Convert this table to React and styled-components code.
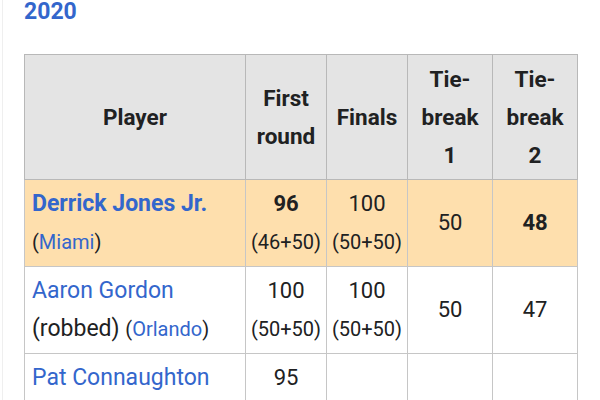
import React from 'react';
import styled, { createGlobalStyle } from 'styled-components';

const GlobalStyle = createGlobalStyle`
  body {
    margin: 0;
    background: #ffffff;
    font-family: Roboto, "Liberation Sans", sans-serif;
    color: #202122;
  }
`;

const rows = [
  {
    player: 'Derrick Jones Jr.',
    team: 'Miami',
    winner: true,
    first: { total: '96', split: '(46+50)' },
    finals: { total: '100', split: '(50+50)' },
    tie1: '50',
    tie2: '48',
  },
  {
    player: 'Aaron Gordon',
    note: '(robbed)',
    team: 'Orlando',
    first: { total: '100', split: '(50+50)' },
    finals: { total: '100', split: '(50+50)' },
    tie1: '50',
    tie2: '47',
  },
  {
    player: 'Pat Connaughton',
    first: { total: '95' },
  },
];

const Page = styled.div`
  margin-left: 2px;
  border-left: 1px solid #efefef;
  padding: 0 0 0 21px;
  height: 400px;
  overflow: hidden;
`;

const Year = styled.h2`
  margin: 0;
  font-size: 23px;
  line-height: 24px;
  font-weight: 700;
  color: #3366cc;
`;

const Table = styled.table`
  margin-top: 30px;
  border-collapse: collapse;
  table-layout: fixed;
  width: 554px;
  font-size: 22px;
  line-height: 38px;
`;

const HeadCell = styled.th`
  background: #e4e4e4;
  border: 1px solid #b8b8b8;
  padding: 5px 2px;
  font-size: 22.5px;
  font-weight: 700;
  text-align: center;
  vertical-align: middle;
  height: 114px;
`;

const Row = styled.tr`
  background: ${(p) => (p.$winner ? '#fedfad' : '#ffffff')};
`;

const Cell = styled.td`
  border: 1px solid #c6c6c6;
  padding: 5px ${(p) => (p.$left ? '7px' : '2px')};
  text-align: ${(p) => (p.$left ? 'left' : 'center')};
  vertical-align: middle;
  font-size: ${(p) => (p.$left ? '23px' : '22px')};
  font-weight: ${(p) => (p.$bold ? 700 : 400)};
  white-space: nowrap;
`;

const PlayerLink = styled.a`
  color: #3366cc;
  text-decoration: none;
  font-weight: ${(p) => (p.$bold ? 700 : 400)};
`;

const Team = styled.span`
  font-size: 20px;
  a {
    color: #3366cc;
    text-decoration: none;
  }
`;

const Total = styled.div`
  font-weight: ${(p) => (p.$bold ? 700 : 400)};
`;

const Split = styled.div`
  font-size: 20px;
  font-weight: 400;
`;

const Score = ({ value, bold }) =>
  value ? (
    <>
      <Total $bold={bold}>{value.total}</Total>
      {value.split && <Split>{value.split}</Split>}
    </>
  ) : null;

export default function App() {
  return (
    <Page>
      <GlobalStyle />
      <Year>2020</Year>
      <Table>
        <colgroup>
          <col style={{ width: 221 }} />
          <col style={{ width: 81 }} />
          <col style={{ width: 81 }} />
          <col style={{ width: 85 }} />
          <col style={{ width: 85 }} />
        </colgroup>
        <thead>
          <tr>
            <HeadCell>Player</HeadCell>
            <HeadCell>
              First
              <br />
              round
            </HeadCell>
            <HeadCell>Finals</HeadCell>
            <HeadCell>
              Tie-
              <br />
              break
              <br />1
            </HeadCell>
            <HeadCell>
              Tie-
              <br />
              break
              <br />2
            </HeadCell>
          </tr>
        </thead>
        <tbody>
          {rows.map((r) => (
            <Row key={r.player} $winner={r.winner}>
              <Cell $left>
                <PlayerLink href="#" $bold={r.winner}>
                  {r.player}
                </PlayerLink>
                <br />
                {r.note && <>{r.note} </>}
                {r.team && (
                  <Team>
                    (<a href="#">{r.team}</a>)
                  </Team>
                )}
              </Cell>
              <Cell>
                <Score value={r.first} bold={r.winner} />
              </Cell>
              <Cell>
                <Score value={r.finals} />
              </Cell>
              <Cell>{r.tie1}</Cell>
              <Cell $bold={r.winner}>{r.tie2}</Cell>
            </Row>
          ))}
        </tbody>
      </Table>
    </Page>
  );
}
